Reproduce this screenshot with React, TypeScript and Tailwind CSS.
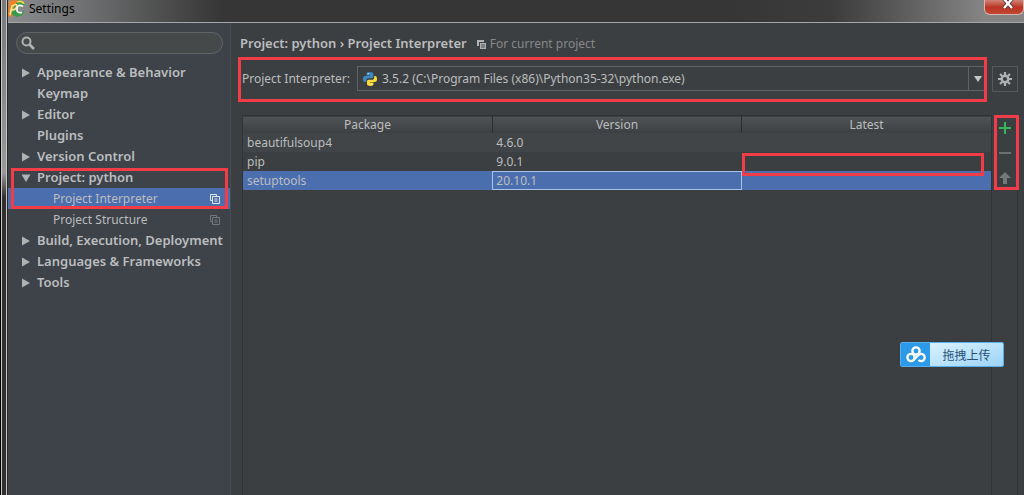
import React from 'react';

const tree = [
  {label: 'Appearance & Behavior', arrow: true},
  {label: 'Keymap'},
  {label: 'Editor', arrow: true},
  {label: 'Plugins'},
  {label: 'Version Control', arrow: true},
  {
    label: 'Project: python',
    open: true,
    arrow: true,
    children: [
      {label: 'Project Interpreter', selected: true},
      {label: 'Project Structure', selected: false},
    ],
  },
  {label: 'Build, Execution, Deployment', arrow: true},
  {label: 'Languages & Frameworks', arrow: true},
  {label: 'Tools', arrow: true},
];

const packages = [
  {name: 'beautifulsoup4', version: '4.6.0', latest: ''},
  {name: 'pip', version: '9.0.1', latest: '', marked: true},
  {name: 'setuptools', version: '20.10.1', latest: '', selected: true},
];

function Mark({className}: {className: string}) {
  return <div className={`pointer-events-none absolute z-10 border-3 border-[#f23c47] ${className}`} />;
}

function Arrow({open}: {open?: boolean}) {
  return (
    <svg width="10" height="10" viewBox="0 0 10 10" fill="#afb1b3">
      <path d={open ? 'M0.500 1.500h9L5 9z' : 'M1 0.500v9L9 5z'} />
    </svg>
  );
}

function CopyIcon({className}: {className: string}) {
  return (
    <svg width="10" height="10" viewBox="0 0 10 10" fill="none" stroke="currentColor" className={className}>
      <path d="M2.500 6.500h-2v-6h6v2" />
      <path d="M2.500 2.500h7v7h-7zM4.500 5h3M4.500 7h3" />
    </svg>
  );
}

// heavier variant used next to the breadcrumb
function ScopeIcon() {
  return (
    <svg width="9" height="9" viewBox="0 0 9 9" className="mr-1 ml-[10px]">
      <path d="M0 0h7v2H2v4H0z" fill="#afb1b3" />
      <path d="M3 3h6v6H3z" fill="#afb1b3" />
      <path d="M4 5h4M4 7h4" stroke="#4d5052" />
    </svg>
  );
}

function AppLogo() {
  return (
    <svg width="17" height="17" viewBox="0 0 17 17">
      <path d="M1 1l8-1 2 5-3 5-3 1-1 6-4-1z" fill="#f07f22" />
      <path d="M8 3l4-3 5 4-3 3-3-1-2 4 2 3 5-2-1 4-6 2-6-3z" fill="#3b9a4a" />
      <path d="M9 2q5-2 7 2" fill="none" stroke="#f4d44a" strokeWidth="1.600" />
      <path d="M2 15l2-9q5-3 5 0-1 4-5 4" fill="none" stroke="#ffe89a" strokeWidth="1.700" />
      <path d="M15 6.500q-5-3-6 2t5 4" fill="none" stroke="#fff" strokeWidth="1.600" />
    </svg>
  );
}

function PythonLogo() {
  return (
    <svg width="16" height="16" viewBox="0 0 16 16">
      <path d="M7.800 1C5.500 1 4.500 1.800 4.500 3v1.500H8V5H3C1.700 5 1 6.300 1 8s.7 3 2 3h1.300V9.300C4.300 8 5.300 7.200 6.500 7.200h3.200c1 0 1.700-.7 1.700-1.700V3c0-1.200-1.200-2-3.600-2z" fill="#3b87c0" />
      <path d="M8.200 15c2.300 0 3.300-.8 3.300-2v-1.500H8V11h5c1.300 0 2-1.300 2-3s-.7-3-2-3h-.8v1.700c0 1.200-1 2.100-2.200 2.100H6.700C5.700 8.800 5 9.500 5 10.500V13c0 1.200 1.200 2 3.200 2z" fill="#fbdb39" />
      <circle cx="6.200" cy="2.800" r=".7" fill="#e8f1f7" />
      <circle cx="9.800" cy="13.200" r=".7" fill="#fff8d0" />
    </svg>
  );
}

function GearIcon() {
  return (
    <svg width="14" height="14" viewBox="0 0 14 14" stroke="#afb1b3" fill="none">
      <circle cx="7" cy="7" r="3.300" strokeWidth="2.400" />
      <path d="M7 0v3M7 11v3M0 7h3M11 7h3M2.050 2.050l2 2M9.950 9.950l2 2M2.050 11.950l2-2M9.950 4.050l2-2" strokeWidth="2.200" />
    </svg>
  );
}

function TitleBar() {
  return (
    <header className="flex h-[22px] items-start justify-between bg-linear-to-r from-[#77787a] to-[#858585]">
      <div className="flex h-full items-start gap-1 bg-linear-to-r from-[#8b8d8f] to-[#6b6c6d] pr-5 text-[12px] text-black">
        <AppLogo />
        <h1 className="leading-[17px]">Settings</h1>
      </div>
      <div className="h-full flex-1 bg-linear-to-r from-[#6b6c6d] via-[#363636] via-20% to-[#363636]" />
      <div className="h-full w-1/4 bg-linear-to-r from-[#363636] via-[#3c3c3c] via-40% to-[#858585]" />
      <button
        aria-label="Close"
        className="flex h-[15px] w-10 items-start justify-center rounded-b-md border border-t-0 border-[#d5b8b3] bg-linear-to-b from-[#d08377] via-[#b93424] to-[#c34731]">
        <svg width="12" height="10" viewBox="0 0 12 10" className="ml-2">
          <path d="M2 -1l8 9M10 -1l-8 9" stroke="#4a2b28" strokeWidth="4" />
          <path d="M2 -1l8 9M10 -1l-8 9" stroke="#fff" strokeWidth="2.500" />
        </svg>
      </button>
    </header>
  );
}

function Sidebar() {
  return (
    <aside className="w-[223px] shrink-0 border-r border-[#4a4d4f] bg-[#3e434a] pt-[9px]">
      <label className="mr-[7px] ml-2 flex h-[22px] items-center rounded-full border border-[#626567] bg-[#45494a] pl-1">
        <svg width="14" height="14" viewBox="0 0 14 14" fill="none" stroke="#afb1b3">
          <circle cx="5.500" cy="5.500" r="4" strokeWidth="2" />
          <path d="M8.500 8.500l4.500 4.500" strokeWidth="2.600" />
        </svg>
        <input aria-label="Search settings" className="min-w-0 flex-1 bg-transparent px-1 outline-none" />
      </label>
      <nav className="mt-2">
        <ul>
          {tree.map((item) => (
            <li key={item.label} className="relative">
              <a href="#" className="flex h-[21px] items-center pl-[13px] text-[13px] font-semibold">
                <span className="w-4">{item.arrow && <Arrow open={item.open} />}</span>
                <span className="whitespace-nowrap">{item.label}</span>
              </a>
              {item.children && (
                <ul>
                  {item.children.map((child) => (
                    <li key={child.label}>
                      <a
                        href="#"
                        className={`flex h-[21px] items-center justify-between pr-[10px] pl-[45px] ${child.selected ? 'bg-[#4b6eaf]' : ''}`}>
                        {child.label}
                        <CopyIcon className={child.selected ? 'text-[#dfe5ee]' : 'text-[#74787c]'} />
                      </a>
                    </li>
                  ))}
                </ul>
              )}
              {item.children && <Mark className="top-px right-[2px] left-[3px] h-[41px]" />}
            </li>
          ))}
        </ul>
      </nav>
    </aside>
  );
}

function InterpreterRow() {
  return (
    <div className="mt-3 flex items-start gap-[5px]">
      <div className="relative flex flex-1 items-center">
        <label htmlFor="interpreter" className="w-[116px] shrink-0 pl-1 whitespace-nowrap">Project Interpreter:</label>
        <div className="relative ml-[3px] flex h-[25px] flex-1 items-center border border-[#5f6365] pl-1">
          <PythonLogo />
          <select id="interpreter" className="h-full min-w-0 flex-1 appearance-none bg-transparent pl-1 outline-none">
            <option>3.5.2 (C:\Program Files (x86)\Python35-32\python.exe)</option>
          </select>
          <span className="pointer-events-none flex h-full w-[18px] items-center justify-center border-l border-[#5f6365]">
            <svg width="8" height="6" viewBox="0 0 8 6" fill="#c4c6c8">
              <path d="M0 0h8L4 6z" />
            </svg>
          </span>
        </div>
        <Mark className="-top-[9px] right-0 -bottom-[11px] left-0" />
      </div>
      <button aria-label="Interpreter settings" className="flex size-[26px] items-center justify-center border border-[#55595b]">
        <GearIcon />
      </button>
    </div>
  );
}

function PackageTable() {
  return (
    <div className="relative min-w-0 flex-1 border-x border-[#313436]">
      <table className="w-full table-fixed border-collapse text-left">
        <thead>
          <tr className="h-[17px] border-t border-[#2f3233] bg-linear-to-b from-[#505355] to-[#3c3f41] text-center leading-[17px]">
            <th className="p-0 font-normal">Package</th>
            <th className="border-l border-[#2b2d2e] p-0 font-normal">Version</th>
            <th className="border-l border-[#2b2d2e] p-0 font-normal">Latest</th>
          </tr>
        </thead>
        <tbody>
          {packages.map((pkg) => (
            <tr key={pkg.name} className={`h-[19px] leading-[17px] ${pkg.selected ? 'bg-[#4b6eaf]' : 'odd:bg-[#414547]'}`}>
              <td className="py-0 pl-1">{pkg.name}</td>
              <td className={`py-0 pl-1 ${pkg.selected ? 'outline -outline-offset-1 outline-[#a9c4ec]' : ''}`}>{pkg.version}</td>
              <td className="relative p-0">
                {pkg.latest}
                {pkg.marked && <Mark className="top-px right-[7px] left-0 h-[23px]" />}
              </td>
            </tr>
          ))}
        </tbody>
      </table>
    </div>
  );
}

function Toolbar() {
  return (
    <div className="w-[26px] shrink-0 border-r border-[#313436]">
      <div className="relative flex h-[75px] flex-col items-center justify-around">
        <button aria-label="Install package">
          <svg width="12" height="12" viewBox="0 0 12 12"><path d="M6 0v12M0 6h12" stroke="#36b557" strokeWidth="2" /></svg>
        </button>
        <button aria-label="Uninstall package">
          <svg width="12" height="12" viewBox="0 0 12 12"><path d="M0 6h12" stroke="#6d7072" strokeWidth="2" /></svg>
        </button>
        <button aria-label="Upgrade package">
          <svg width="12" height="12" viewBox="0 0 12 12"><path d="M6 0l6 6H8v6H4V6H0z" fill="#75787a" /></svg>
        </button>
        <Mark className="inset-y-0 -right-[2px] left-[2px]" />
      </div>
    </div>
  );
}

function UploadButton() {
  return (
    <button className="fixed right-5 bottom-32 flex h-[25px] w-[104px] overflow-hidden rounded-xs border border-[#58b0ea] text-[12px] text-[#2a5078]">
      <span className="flex h-full w-[29px] items-center justify-center bg-[#2c9ae8]">
        <svg width="20" height="17" viewBox="0 0 20 17" fill="none" stroke="#fff" strokeWidth="2.400">
          <circle cx="10" cy="5" r="3.600" />
          <circle cx="5" cy="11.500" r="3.600" />
          <path d="M7.500 14l5-5a3.600 3.600 0 1 1 0 5" />
        </svg>
      </span>
      <span className="flex h-full flex-1 items-center justify-center bg-linear-to-br from-[#d9f2ff] to-[#9cd3f6] font-['Noto_Sans_CJK_SC',sans-serif]">
        拖拽上传
      </span>
    </button>
  );
}

export default function App(): React.JSX.Element {
  return (
    <div className="flex min-h-screen bg-[#3c3f41] font-['Noto_Sans','Noto_Sans_CJK_SC',sans-serif] text-[12px] text-[#bbbdbf]">
      <div className="flex w-[8px] shrink-0 border-l border-black">
        <div className="flex-1 border-x border-[#c5c7c8] bg-linear-to-b from-[#77797a] via-[#99999a] via-35% to-[#332f2f] to-40%" />
        <div className="w-px bg-[#252729]" />
      </div>
      <div className="flex min-w-0 flex-1 flex-col">
        <TitleBar />
        <div className="flex flex-1 border-t border-[#a5a7a8]">
          <Sidebar />
          <main className="flex min-w-0 flex-1 flex-col pt-[11px] pr-[6px] pl-[7px]">
            <div className="flex h-5 items-center pl-[2px]">
              <h2 className="text-[13px] font-semibold">Project: python › Project Interpreter</h2>
              <ScopeIcon />
              <span className="text-[#85888a]">For current project</span>
            </div>
            <InterpreterRow />
            <div className="mt-[23px] flex flex-1 pl-1">
              <PackageTable />
              <Toolbar />
            </div>
          </main>
        </div>
      </div>
      <UploadButton />
    </div>
  );
}
